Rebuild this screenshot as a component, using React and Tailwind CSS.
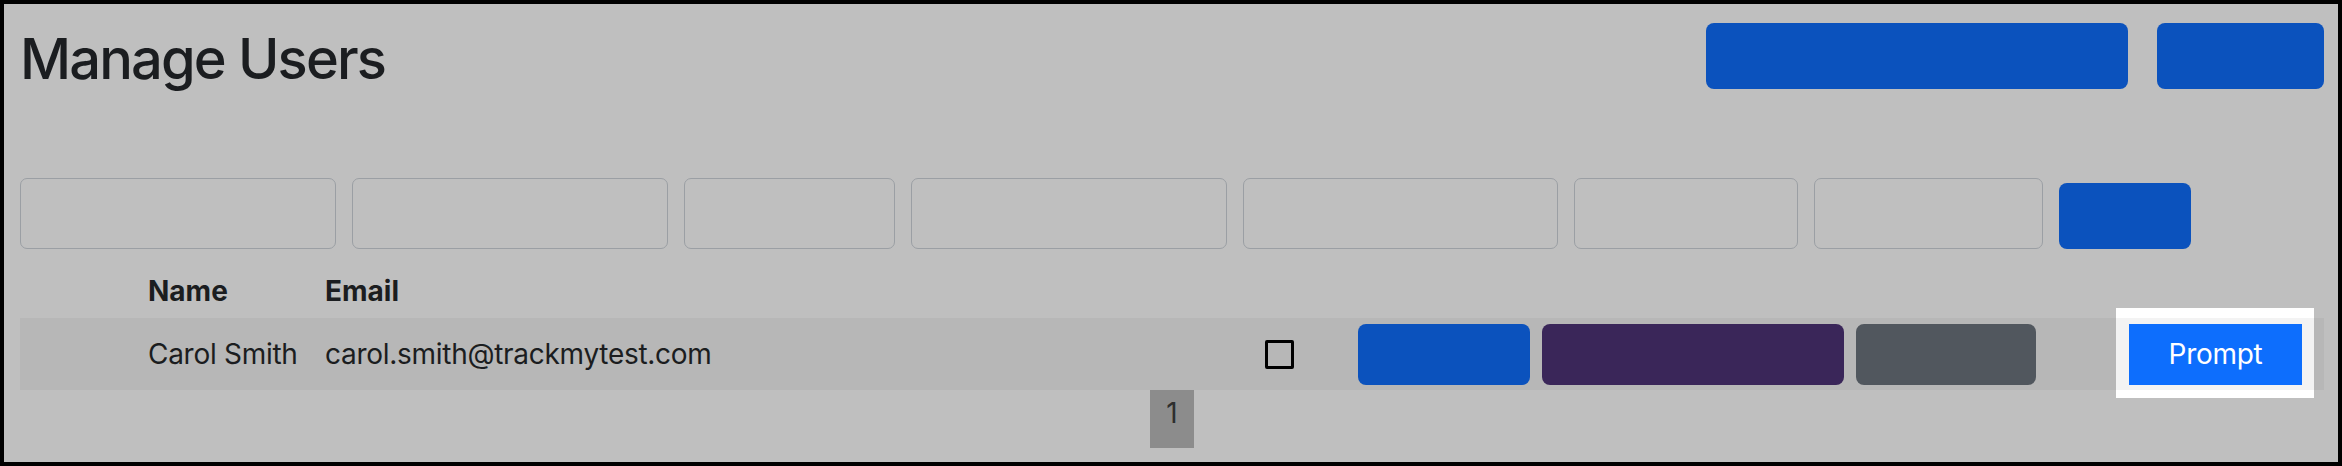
import React from "react";

export default function App() {
  const inputs = [316, 316, 211, 316, 315, 224, 229];
  return (
    <div className="w-[2342px] h-[466px] border-4 border-black bg-[#bfbfbf] font-['Inter',sans-serif] text-[#1b1d20] overflow-hidden">
      <div className="pl-4 pr-[14px]">
        {/* Header */}
        <div className="flex items-start justify-between pt-[19px] h-[85px]">
          <h2 className="mt-[3px] text-[56px] leading-[66px] font-medium tracking-[-0.033em]">Manage Users</h2>
          <div className="flex gap-[29px]">
            <button className="w-[422px] h-[66px] rounded-[8px] bg-[#0b52bd]" />
            <button className="w-[167px] h-[66px] rounded-[8px] bg-[#0b52bd]" />
          </div>
        </div>

        {/* Filters */}
        <div className="flex items-end gap-4 mt-[89px]">
          {inputs.map((w, i) => (
            <div
              key={i}
              className="h-[71px] rounded-[7px] border border-[#9b9fa4] bg-[#bfbfbf]"
              style={{ width: w }}
            />
          ))}
          <button className="w-[132px] h-[66px] rounded-[8px] bg-[#0b52bd]" />
        </div>

        {/* Table header */}
        <div className="flex items-end h-[69px] pb-[6px] text-[28px] leading-[42px] font-bold">
          <div className="w-[114px]" />
          <div className="w-[177px] pl-[14px]">Name</div>
          <div className="pl-[14px]">Email</div>
        </div>

        {/* Row */}
        <div className="flex items-center h-[72px] bg-[#b7b7b7] text-[28px] leading-[42px] tracking-[-0.01em]">
          <div className="w-[114px]" />
          <div className="w-[177px] pl-[14px] whitespace-nowrap">Carol Smith</div>
          <div className="w-[415px] pl-[14px] whitespace-nowrap">carol.smith@trackmytest.com</div>
          <div className="ml-[539px] w-[29px] h-[29px] border-[3px] border-black rounded-[2px]" />
          <button className="ml-[64px] w-[172px] h-[61px] rounded-[8px] bg-[#0b52bd]" />
          <button className="ml-[12px] w-[302px] h-[61px] rounded-[8px] bg-[#3a2659]" />
          <button className="ml-[12px] w-[180px] h-[61px] rounded-[8px] bg-[#51575e]" />
          <div className="relative ml-[80px] w-[198px] h-full">
            <div className="absolute -top-[10px] -bottom-[8px] inset-x-0 bg-white" />
            <div className="absolute inset-0 bg-[#f3f3f3]" />
            <div className="relative h-full flex items-center pl-[13px]">
              <button className="w-[173px] h-[61px] bg-[#0d6efd] text-white text-[28px] leading-[42px]">
                Prompt
              </button>
            </div>
          </div>
        </div>

        {/* Pagination */}
        <div className="flex justify-center">
          <div className="w-[44px] h-[58px] pt-[2px] bg-[#8c8c8c] text-[#2e2e2e] text-[28px] leading-[42px] text-center">
            1
          </div>
        </div>
      </div>
    </div>
  );
}
